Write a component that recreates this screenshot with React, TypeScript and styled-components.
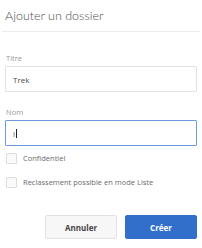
import React from "react";
import styled, { createGlobalStyle } from "styled-components";

const Global = createGlobalStyle`
  html, body { margin: 0; padding: 0; background: #ffffff; }
  body { font-family: "Open Sans", "Noto Sans", sans-serif; }
  * { box-sizing: border-box; }
`;

const Dialog = styled.div`
  width: 202px;
  height: 248px;
  padding: 0 5px;
  display: flex;
  flex-direction: column;
  background: #fff;
`;

const Header = styled.div`
  height: 32px;
  margin: 0 -3px;
  padding: 8px 3px 0 3px;
  border-bottom: 1px solid #ececec;
`;

const Title = styled.h1`
  margin: 0;
  font-family: "Lato", "Open Sans", sans-serif;
  font-weight: 300;
  font-size: 12.5px;
  line-height: 16px;
  color: #505050;
`;

const Form = styled.div`
  display: flex;
  flex-direction: column;
  padding-top: 20px;
  gap: 14px;
`;

const Field = styled.div`
  display: flex;
  flex-direction: column;
  gap: 2px;
`;

const Label = styled.div`
  font-size: 7.5px;
  line-height: 12px;
  color: #9a9a9a;
  padding-left: 1px;
`;

const Input = styled.div<{ $focused?: boolean }>`
  height: 26px;
  border: 1px solid ${(p) => (p.$focused ? "#6f9be0" : "#e1e1e1")};
  border-radius: 1px;
  padding: 0 7px;
  display: flex;
  align-items: center;
  font-size: 8px;
  color: #4a4a4a;
`;

const Caret = styled.span`
  display: inline-block;
  width: 1px;
  height: 9px;
  background: #222;
  margin-left: 1px;
`;

const Checks = styled.div`
  display: flex;
  flex-direction: column;
  margin-top: 0;
`;

const CheckRow = styled.label`
  height: 24px;
  display: flex;
  align-items: center;
  gap: 6px;
  padding-left: 1px;
  font-size: 7.5px;
  color: #6a6a6a;
`;

const Box = styled.span`
  width: 11px;
  height: 11px;
  border: 1px solid #dcdcdc;
  border-radius: 1px;
  background: #fafafa;
`;

const Footer = styled.div`
  display: flex;
  justify-content: flex-end;
  gap: 8px;
  margin-top: 21px;
`;

const Button = styled.button<{ $primary?: boolean }>`
  width: 72px;
  height: 24px;
  border-radius: 2px;
  border: 1px solid ${(p) => (p.$primary ? "#326fca" : "#e2e2e2")};
  background: ${(p) => (p.$primary ? "#326fca" : "#f7f7f7")};
  color: ${(p) => (p.$primary ? "#ffffff" : "#444444")};
  font-family: "Open Sans", sans-serif;
  font-weight: 700;
  font-size: 8px;
  padding: 0;
`;

export default function App() {
  return (
    <>
      <Global />
      <Dialog>
        <Header>
          <Title>Ajouter un dossier</Title>
        </Header>
        <Form>
          <Field>
            <Label>Titre</Label>
            <Input>Trek</Input>
          </Field>
          <Field>
            <Label>Nom</Label>
            <Input $focused>
              i<Caret />
            </Input>
          </Field>
        </Form>
        <Checks>
          <CheckRow>
            <Box />
            Confidentiel
          </CheckRow>
          <CheckRow>
            <Box />
            Reclassement possible en mode Liste
          </CheckRow>
        </Checks>
        <Footer>
          <Button>Annuler</Button>
          <Button $primary>Créer</Button>
        </Footer>
      </Dialog>
    </>
  );
}
